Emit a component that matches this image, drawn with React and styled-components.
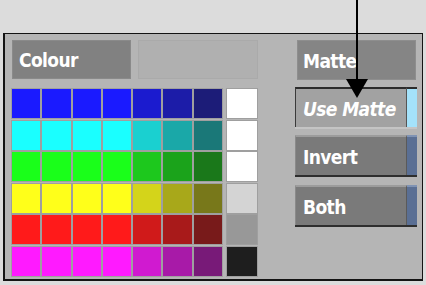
import React from "react";
import styled, { createGlobalStyle } from "styled-components";

const GlobalStyle = createGlobalStyle`
  html, body {
    margin: 0;
    padding: 0;
    background: #dcdcdc;
  }
  body {
    font-family: "DejaVu Sans Condensed", "DejaVu Sans", "Liberation Sans", sans-serif;
  }
`;

const palette = [
  ["#1a1aff", "#1a1aff", "#1a1aff", "#1a1aff", "#1b1bcf", "#1c1ca8", "#1c1c78"],
  ["#1affff", "#1affff", "#1affff", "#1affff", "#1ad0d0", "#1aa8a8", "#1a7878"],
  ["#1aff1a", "#1aff1a", "#1aff1a", "#1aff1a", "#1dc81d", "#1ba31b", "#1a781a"],
  ["#ffff1a", "#ffff1a", "#ffff1a", "#ffff1a", "#d4d41a", "#a8a81a", "#78781a"],
  ["#ff1a1a", "#ff1a1a", "#ff1a1a", "#ff1a1a", "#d01a1a", "#a81a1a", "#781a1a"],
  ["#ff1aff", "#ff1aff", "#ff1aff", "#ff1aff", "#d01ad0", "#a81aa8", "#781a78"],
];

const greys = ["#ffffff", "#ffffff", "#ffffff", "#d4d4d4", "#989898", "#1e1e1e"];

const App = () => {
  return (
    <Page>
      <GlobalStyle />
      <Panel>
        <Left>
          <Header>
            <Label>Colour</Label>
            <Blank />
          </Header>
          <Swatches>
            <ColourGrid>
              {palette.flat().map((c, i) => (
                <Cell key={i} colour={c} />
              ))}
            </ColourGrid>
            <GreyColumn>
              {greys.map((c, i) => (
                <Cell key={i} colour={c} />
              ))}
            </GreyColumn>
          </Swatches>
        </Left>
        <Right>
          <MatteLabel>Matte</MatteLabel>
          <Button pressed>
            <ButtonBody pressed>
              <em>Use Matte</em>
            </ButtonBody>
            <Strip pressed />
          </Button>
          <Button>
            <ButtonBody>Invert</ButtonBody>
            <Strip />
          </Button>
          <Button>
            <ButtonBody>Both</ButtonBody>
            <Strip />
          </Button>
        </Right>
      </Panel>
      <Arrow width="426" height="100" viewBox="0 0 426 100">
        <line x1="357" y1="0" x2="357" y2="84" stroke="#000" strokeWidth="2" />
        <polygon points="346,79 368,79 357,98" fill="#000" />
      </Arrow>
    </Page>
  );
};

const Page = styled.div`
  position: relative;
  width: 426px;
  height: 285px;
  padding: 33px 0 0 3px;
  box-sizing: border-box;
`;

const Panel = styled.div`
  display: flex;
  width: 420px;
  height: 248px;
  box-sizing: border-box;
  background: #b5b5b5;
  border-style: solid;
  border-color: #141414;
  border-width: 1px 1px 2px 2px;
  padding: 6px 5px 0 7px;
`;

const Left = styled.div`
  display: flex;
  flex-direction: column;
  width: 246px;
`;

const Header = styled.div`
  display: flex;
  gap: 7px;
  height: 39px;
`;

const Label = styled.div`
  display: flex;
  align-items: center;
  width: 119px;
  box-sizing: border-box;
  padding-left: 6px;
  padding-top: 1px;
  background: #818181;
  border: 1px solid #8a8a8a;
  color: #fff;
  font-size: 19px;
  font-weight: bold;
  letter-spacing: -0.6px;
`;

const Blank = styled.div`
  width: 120px;
  background: #b0b0b0;
  border: 1px solid #aaaaaa;
  box-sizing: border-box;
`;

const Swatches = styled.div`
  display: flex;
  gap: 5px;
  margin-top: 10px;
`;

const ColourGrid = styled.div`
  display: grid;
  grid-template-columns: repeat(7, 28.3px);
  grid-template-rows: repeat(6, 29px);
  column-gap: 2px;
  row-gap: 2.6px;
`;

const GreyColumn = styled.div`
  display: grid;
  grid-template-columns: 29.5px;
  grid-template-rows: repeat(6, 29px);
  row-gap: 2.6px;
`;

const Cell = styled.div`
  background: ${({ colour }) => colour};
  box-shadow: 0 0 0 1px rgba(140, 140, 140, 0.55);
`;

const Right = styled.div`
  display: flex;
  flex-direction: column;
  width: 122px;
  margin-left: 37px;
`;

const MatteLabel = styled(Label)`
  margin-left: 2px;
  width: 119px;
  height: 40px;
  padding-left: 5px;
  background: #858585;
  border-color: #8e8e8e;
  flex: none;
`;

const Button = styled.div`
  display: flex;
  height: 42px;
  margin-top: ${({ pressed }) => (pressed ? "7px" : "6px")};
  box-sizing: border-box;
  border-bottom: 2px solid ${({ pressed }) => (pressed ? "#c4c4c4" : "#2e2e2e")};
  &:last-child {
    margin-top: 8px;
  }
`;

const ButtonBody = styled.div`
  flex: 1;
  display: flex;
  align-items: center;
  padding-left: 7px;
  padding-top: 1px;
  color: #fff;
  font-size: 19px;
  font-weight: bold;
  letter-spacing: -0.6px;
  background: ${({ pressed }) => (pressed ? "#a2a2a2" : "#7a7a7a")};
  border-top: 2px solid ${({ pressed }) => (pressed ? "#2c2c2c" : "#9c9c9c")};
  border-left: 1px solid ${({ pressed }) => (pressed ? "#3a3a3a" : "#8a8a8a")};
  border-right: 1px solid ${({ pressed }) => (pressed ? "#555" : "#5a5a5a")};
  em {
    font-style: italic;
  }
`;

const Strip = styled.div`
  width: 10px;
  background: ${({ pressed }) => (pressed ? "#a4e2fa" : "#5a6f94")};
  border-top: 2px solid ${({ pressed }) => (pressed ? "#2c2c2c" : "#7f93b4")};
`;

const Arrow = styled.svg`
  position: absolute;
  left: 0;
  top: 0;
  pointer-events: none;
`;

export default App;
